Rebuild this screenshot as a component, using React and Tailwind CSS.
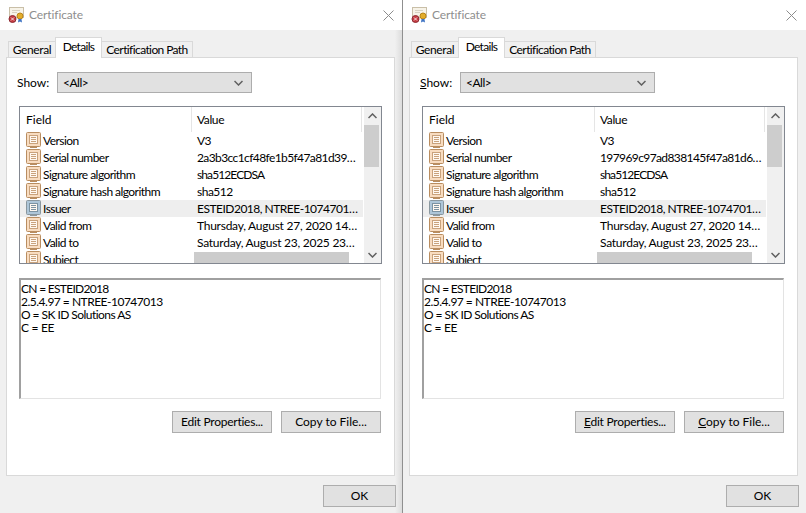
import React from 'react';

const rows = [
  ['Version', 'V3', 'V3'],
  ['Serial number', '2a3b3cc1cf48fe1b5f47a81d39…', '197969c97ad838145f47a81d6…', 'tracking-[-0.6px]'],
  ['Signature algorithm', 'sha512ECDSA', 'sha512ECDSA', 'tracking-[-0.9px]'],
  ['Signature hash algorithm', 'sha512', 'sha512'],
  ['Issuer', 'ESTEID2018, NTREE-1074701…', 'ESTEID2018, NTREE-1074701…'],
  ['Valid from', 'Thursday, August 27, 2020 14…', 'Thursday, August 27, 2020 14…', 'tracking-[-0.25px]'],
  ['Valid to', 'Saturday, August 23, 2025 23…', 'Saturday, August 23, 2025 23…', 'tracking-[-0.25px]'],
];

const details = [
  ['CN = ESTEID2018', 'tracking-[-0.7px]'],
  ['2.5.4.97 = NTREE-10747013', 'tracking-[-0.5px]'],
  ['O = SK ID Solutions AS', 'tracking-[-0.55px]'],
  ['C = EE', 'tracking-[-0.3px]'],
];

const FieldIcon = ({ selected }) => {
  const edge = selected ? '#8a979e' : '#b98d60';
  const fill = selected ? '#aec6d8' : '#f8dcc0';
  const line = selected ? '#7c93a2' : '#c9a27c';
  return (
    <svg width="15" height="17" viewBox="0 0 15 17" className="shrink-0">
      <rect x="0.500" y="0.500" width="14" height="14" rx="1" fill={fill} stroke={edge} />
      <rect x="3.500" y="3.500" width="8" height="8" fill="#fff8f0" stroke={line} />
      <path d="M5 5.500h5M5 7.500h5M5 9.500h5" stroke={line} />
      <path d="M4 15.500h7" stroke={edge} />
    </svg>
  );
};

const CertIcon = () => (
  <svg width="17" height="17" viewBox="0 0 17 17" className="shrink-0">
    <rect x="1.500" y="0.500" width="14" height="10" fill="#f7f3e8" stroke="#c9bfa8" />
    <path d="M4 3.500h8M4 5.500h5" stroke="#d8d2c2" />
    <circle cx="12" cy="9" r="3" fill="#e3ad2a" stroke="#b98418" />
    <path d="M10.500 12l-.5 3.500 2-1 2 1-.5-3.500" fill="#3f74c4" />
    <circle cx="4.500" cy="12" r="3.500" fill="#c8393f" stroke="#8c2a33" />
    <path d="M3 10.500l3 3M6 10.500l-3 3" stroke="#f5e3e3" />
  </svg>
);

const Chevron = ({ up }) => (
  <svg width="9" height="6" viewBox="0 0 9 6">
    <path d={up ? 'M0.500 5L4.500 1L8.500 5' : 'M0.500 1L4.500 5L8.500 1'} fill="none" stroke="#606060" strokeWidth="1.500" />
  </svg>
);

const Key = ({ on, children }) => (on ? <span className="underline">{children}</span> : children);

const Button = ({ children, className }) => (
  <button className={`h-[22px] bg-[#e1e1e1] border border-[#adadad] text-xs text-black whitespace-nowrap ${className}`}>
    {children}
  </button>
);

const CertWindow = ({ valueIndex, accessKeys }) => (
  <div className="relative w-[403px] h-[513px] flex flex-col bg-[#f0f0f0]">
    {/* Title bar */}
    <div className="h-[30px] bg-white flex items-center justify-between pl-2 pr-[9px] shrink-0">
      <div className="flex items-center gap-[4px]">
        <CertIcon />
        <span className="text-xs text-[#8e8e8e] tracking-[-0.1px]">Certificate</span>
      </div>
      <svg width="11" height="11" viewBox="0 0 11 11">
        <path d="M0.500 0.500L10.500 10.500M10.500 0.500L0.500 10.500" stroke="#8c8c8c" />
      </svg>
    </div>

    {/* Tabs */}
    <div className="relative z-10 flex items-end h-[20px] mt-[7px] ml-2 text-xs text-black shrink-0 whitespace-nowrap">
      <div className="h-4 w-[48px] flex items-center justify-center border border-b-0 border-[#d9d9d9] tracking-[-0.4px]">General</div>
      <div className="h-[21px] -mb-px w-[47px] -ml-px pb-[3px] flex items-center justify-center border border-b-0 border-[#d9d9d9] bg-white tracking-[-0.7px]">Details</div>
      <div className="h-4 w-[92px] -ml-px flex items-center justify-center border border-b-0 border-[#d9d9d9] tracking-[-0.6px]">Certification Path</div>
    </div>

    {/* Panel */}
    <div className="ml-[6px] w-[389px] h-[419px] bg-white border border-[#d9d9d9] pt-[14px] pl-3 text-xs text-black shrink-0">
      <div className="flex items-center">
        <span className="w-[40px] -ml-[2px]"><Key on={accessKeys}>S</Key>how:</span>
        <div className="w-[195px] h-[21px] bg-[#e1e1e1] border border-[#adadad] flex items-center justify-between pl-[5px] pr-[8px]">
          <span className="tracking-[-0.5px]">&lt;All&gt;</span>
          <Chevron />
        </div>
      </div>

      {/* Field list */}
      <div className="flex w-[363px] h-[158px] mt-[13px] border border-[#828790] overflow-hidden">
        <div className="w-[344px] shrink-0">
          <div className="h-[25px] flex items-center">
            <div className="w-[171px] pl-[6px]">Field</div>
            <div className="h-full w-[171px] border-x border-[#e5e5e5] pl-[5px] flex items-center tracking-[-0.4px]">Value</div>
          </div>
          {rows.map((row, idx) => (
            <div key={row[0]} className={`h-[17px] w-[343px] flex items-center ${idx === 4 ? 'bg-[#eeeeee]' : ''}`}>
              <div className="w-[171px] shrink-0 pl-[6px] flex items-center gap-[2px]">
                <FieldIcon selected={idx === 4} />
                <span className="whitespace-nowrap tracking-[-0.55px]">{row[0]}</span>
              </div>
              <span className={`pl-[6px] whitespace-nowrap ${row[3] || 'tracking-[-0.5px]'}`}>{row[valueIndex]}</span>
            </div>
          ))}
          <div className="h-[17px] flex">
            <div className="w-[171px] shrink-0 pl-[6px] flex gap-[2px]">
              <FieldIcon />
              <span className="leading-[17px] tracking-[-0.55px]">Subject</span>
            </div>
            <div className="ml-[3px] mt-px w-[155px] h-[11px] bg-[#cccccc]"></div>
          </div>
        </div>
        <div className="flex-1 bg-[#f0f0f0] flex flex-col">
          <div className="h-[18px] flex items-center justify-center"><Chevron up /></div>
          <div className="h-[42px] w-[15px] bg-[#cdcdcd]"></div>
          <div className="mt-auto h-[17px] flex items-center justify-center"><Chevron /></div>
        </div>
      </div>

      {/* Detail text */}
      <div className="w-[362px] h-[121px] mt-[14px] border-t-2 border-l-2 border-r border-b border-t-[#a0a0a0] border-l-[#a0a0a0] border-r-[#e3e3e3] border-b-[#e3e3e3] leading-[13px] pt-[2px]">
        {details.map(([line, spacing]) => (
          <div key={line} className={spacing}>{line}</div>
        ))}
      </div>

      <div className="flex w-[362px] justify-end gap-[9px] mt-3">
        <Button className="w-[100px] tracking-[-0.25px]"><Key on={accessKeys}>E</Key>dit Properties...</Button>
        <Button className="w-[100px]"><Key on={accessKeys}>C</Key>opy to File...</Button>
      </div>
    </div>

    <div className="flex justify-end pr-[7px] mt-[9px]">
      <Button className="w-[73px]">OK</Button>
    </div>
  </div>
);

export default function App() {
  return (
    <div className="flex w-[806px] h-[513px] overflow-hidden font-['Lato','Liberation_Sans',sans-serif]">
      <div className="relative">
        <CertWindow valueIndex={1} />
        {/* Drop shadow of the window on the right */}
        <div className="absolute top-[30px] bottom-0 right-px w-[7px] bg-gradient-to-r from-transparent to-[#dcdcdc]"></div>
        <div className="absolute top-0 bottom-0 right-0 w-px bg-[#8f8f8f]"></div>
      </div>
      <CertWindow valueIndex={2} accessKeys />
    </div>
  );
}
